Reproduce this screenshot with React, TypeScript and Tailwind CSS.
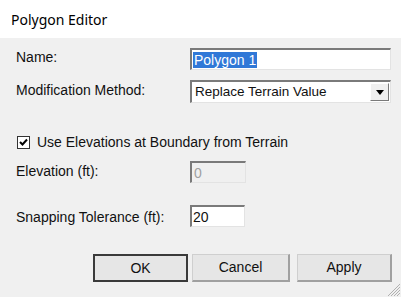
import React from "react";

const sunken =
  "border-t-2 border-l-2 border-b border-r border-t-[#7a7a7a] border-l-[#7a7a7a] border-b-[#e3e3e3] border-r-[#e3e3e3]";

function Label({ children, className = "" }: { children: React.ReactNode; className?: string }) {
  return <div className={"text-[14px] leading-[16px] text-[#111] " + className}>{children}</div>;
}

export default function App() {
  return (
    <div
      className="w-[401px] h-[297px] overflow-hidden bg-[#f0f0f0] flex flex-col relative"
      style={{ fontFamily: '"Liberation Sans", Arial, sans-serif' }}
    >
      <div
        className="h-[38px] bg-white flex items-center pl-[11px] text-[14px] text-black"
        style={{ fontFamily: '"Noto Sans", "Open Sans", sans-serif' }}
      >
        Polygon Editor
      </div>

      <div className="pl-[16px] pr-[10px] pt-[10px] flex flex-col">
        <div className="grid grid-cols-[174px_1fr] h-[22px] items-center">
          <Label className="pb-[5px]">Name:</Label>
          <div className={"h-[22px] bg-white flex items-center pl-[1px] " + sunken}>
            <span className="bg-[#3078d7] text-white text-[14px] leading-[16px] px-[1px]">Polygon 1</span>
          </div>
        </div>

        <div className="grid grid-cols-[174px_1fr] h-[23px] items-center mt-[10px]">
          <Label className="pb-[4px]">Modification Method:</Label>
          <div className={"h-[23px] bg-white flex items-center justify-between " + sunken}>
            <span className="text-[13.5px] leading-[16px] text-[#111] pl-[3px]">Replace Terrain Value</span>
            <div className="w-[19px] h-[18px] mr-[1px] bg-[#f0f0f0] border border-t-white border-l-white border-b-[#7a7a7a] border-r-[#7a7a7a] flex items-center justify-center">
              <svg width="8" height="5" viewBox="0 0 8 5">
                <polygon points="0,0 8,0 4,5" fill="#000" />
              </svg>
            </div>
          </div>
        </div>

        <div className="flex items-center h-[14px] mt-[32px]">
          <div className="w-[13px] h-[13px] ml-[1px] bg-white border border-[#333] flex items-center justify-center">
            <svg width="9" height="9" viewBox="0 0 9 9">
              <polyline points="1,4 3.5,6.5 8,1.5" fill="none" stroke="#000" strokeWidth="2" />
            </svg>
          </div>
          <Label className="ml-[7px]">Use Elevations at Boundary from Terrain</Label>
        </div>

        <div className="grid grid-cols-[174px_56px] h-[22px] items-center mt-[12px]">
          <Label className="pb-[2px]">Elevation (ft):</Label>
          <div className={"h-[22px] bg-[#f0f0f0] flex items-center pl-[2px] " + sunken}>
            <span className="text-[14px] leading-[16px] text-[#a0a0a0]">0</span>
          </div>
        </div>

        <div className="grid grid-cols-[174px_55px] h-[22px] items-center mt-[22px]">
          <Label className="pt-[2px]">Snapping Tolerance (ft):</Label>
          <div className={"h-[22px] bg-white flex items-center pl-[1px] " + sunken}>
            <span className="text-[14px] leading-[16px] text-[#111]">20</span>
          </div>
        </div>
      </div>

      <div className="flex justify-end pr-[9px] mt-[27px]">
        <button className="w-[95px] h-[28px] bg-[#e6e6e6] border-2 border-[#3a3a3a] text-[14px] text-[#111] flex items-center justify-center">
          OK
        </button>
        <button className="w-[98px] h-[28px] ml-[4px] bg-[#e6e6e6] border border-t-[#cfcfcf] border-l-[#cfcfcf] border-b-2 border-r-2 border-b-[#a0a0a0] border-r-[#a0a0a0] text-[14px] text-[#111] flex items-center justify-center">
          Cancel
        </button>
        <button className="w-[95px] h-[28px] ml-[7px] bg-[#e6e6e6] border border-t-[#cfcfcf] border-l-[#cfcfcf] border-b-2 border-r-2 border-b-[#a0a0a0] border-r-[#a0a0a0] text-[14px] text-[#111] flex items-center justify-center">
          Apply
        </button>
      </div>

      <svg className="absolute right-0 bottom-0" width="16" height="16" viewBox="0 0 16 16">
        <line x1="15" y1="3" x2="3" y2="15" stroke="#b0b0b0" strokeWidth="1" />
        <line x1="15" y1="6" x2="6" y2="15" stroke="#b0b0b0" strokeWidth="1" />
        <line x1="15" y1="9" x2="9" y2="15" stroke="#b0b0b0" strokeWidth="1" />
        <line x1="15" y1="12" x2="12" y2="15" stroke="#b0b0b0" strokeWidth="1" />
      </svg>
    </div>
  );
}
